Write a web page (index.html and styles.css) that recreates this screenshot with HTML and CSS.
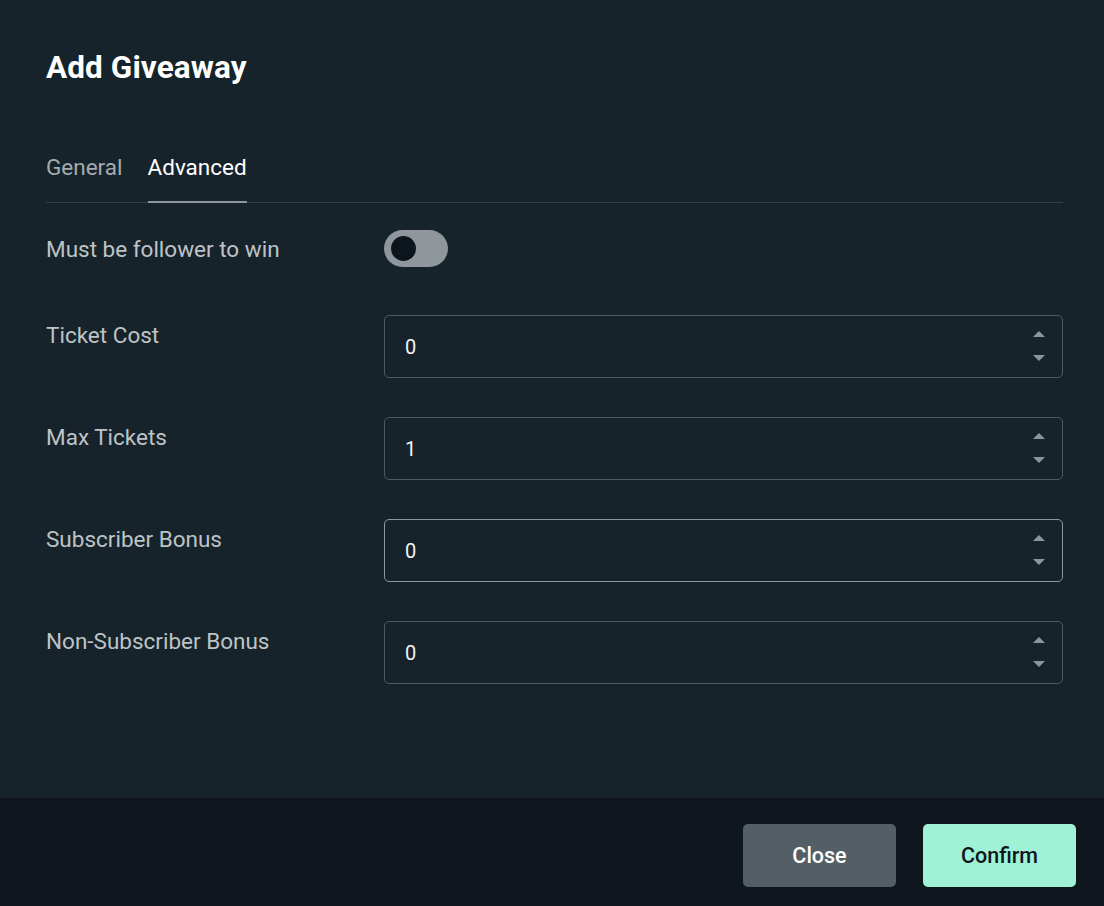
FILE: index.html
```html
<!DOCTYPE html>
<html lang="en">
<head>
    <meta charset="UTF-8">
    <meta name="viewport" content="width=device-width, initial-scale=1.0">
    <title>Add Giveaway</title>
    <link rel="stylesheet" href="styles.css">
</head>
<body>
    <div class="modal">
        <div class="modal-body">
            <h1 class="modal-title">Add Giveaway</h1>

            <div class="tabs">
                <span class="tab">General</span>
                <span class="tab active">Advanced</span>
            </div>

            <div class="form-row toggle-row">
                <label class="field-label">Must be follower to win</label>
                <div class="toggle"><span class="knob"></span></div>
            </div>

            <div class="form-row">
                <label class="field-label">Ticket Cost</label>
                <div class="number-input">
                    <input type="text" value="0">
                    <div class="spin">
                        <svg width="12" height="7" viewBox="0 0 12 7"><path d="M0 7 L6 1 L12 7 Z" fill="#8d969c"/></svg>
                        <svg width="12" height="7" viewBox="0 0 12 7"><path d="M0 0 L6 6 L12 0 Z" fill="#8d969c"/></svg>
                    </div>
                </div>
            </div>

            <div class="form-row">
                <label class="field-label">Max Tickets</label>
                <div class="number-input">
                    <input type="text" value="1">
                    <div class="spin">
                        <svg width="12" height="7" viewBox="0 0 12 7"><path d="M0 7 L6 1 L12 7 Z" fill="#8d969c"/></svg>
                        <svg width="12" height="7" viewBox="0 0 12 7"><path d="M0 0 L6 6 L12 0 Z" fill="#8d969c"/></svg>
                    </div>
                </div>
            </div>

            <div class="form-row">
                <label class="field-label">Subscriber Bonus</label>
                <div class="number-input hover">
                    <input type="text" value="0">
                    <div class="spin">
                        <svg width="12" height="7" viewBox="0 0 12 7"><path d="M0 7 L6 1 L12 7 Z" fill="#8d969c"/></svg>
                        <svg width="12" height="7" viewBox="0 0 12 7"><path d="M0 0 L6 6 L12 0 Z" fill="#8d969c"/></svg>
                    </div>
                </div>
            </div>

            <div class="form-row">
                <label class="field-label">Non-Subscriber Bonus</label>
                <div class="number-input">
                    <input type="text" value="0">
                    <div class="spin">
                        <svg width="12" height="7" viewBox="0 0 12 7"><path d="M0 7 L6 1 L12 7 Z" fill="#8d969c"/></svg>
                        <svg width="12" height="7" viewBox="0 0 12 7"><path d="M0 0 L6 6 L12 0 Z" fill="#8d969c"/></svg>
                    </div>
                </div>
            </div>
        </div>

        <div class="modal-footer">
            <button class="btn btn-close">Close</button>
            <button class="btn btn-confirm">Confirm</button>
        </div>
    </div>
</body>
</html>
```

FILE: styles.css
```css
body {
    margin: 0;
    font-family: Roboto, "Liberation Sans", sans-serif;
    background-color: #17232a;
    color: #fff;
}
.modal {
    width: 1104px;
    height: 906px;
    display: flex;
    flex-direction: column;
    background-color: #17232a;
}
.modal-body {
    flex: 1;
    padding: 0 41px 0 46px;
}
.modal-title {
    margin: 0;
    padding-top: 50px;
    font-size: 31.5px;
    font-weight: 700;
    line-height: 36px;
    letter-spacing: 0.1px;
}
.tabs {
    display: flex;
    gap: 25px;
    margin-top: 68px;
    border-bottom: 1px solid #343f46;
}
.tab {
    font-size: 22.5px;
    line-height: 26px;
    padding-bottom: 21px;
    color: #a3abb0;
    border-bottom: 2px solid transparent;
    margin-bottom: -1px;
}
.tab.active {
    color: #fff;
    border-bottom-color: #8c969c;
}
.form-row {
    display: flex;
    align-items: flex-start;
    margin-bottom: 39px;
}
.toggle-row {
    align-items: center;
    margin-top: 27px;
    margin-bottom: 48px;
}
.field-label {
    width: 338px;
    flex-shrink: 0;
    font-size: 22.5px;
    line-height: 26px;
    color: #bdc3c7;
    padding-top: 7px;
}
.toggle-row .field-label {
    padding-top: 0;
}
.toggle {
    width: 64px;
    height: 37px;
    border-radius: 19px;
    background-color: #90979c;
    display: flex;
    align-items: center;
    padding-left: 7px;
    box-sizing: border-box;
}
.knob {
    width: 25px;
    height: 25px;
    border-radius: 50%;
    background-color: #0d151c;
}
.number-input {
    flex: 1;
    height: 63px;
    box-sizing: border-box;
    border: 1px solid #4e5960;
    border-radius: 5px;
    display: flex;
    align-items: center;
    padding: 0 17px 0 20px;
}
.number-input.hover {
    border-color: #8e979d;
}
.number-input input {
    flex: 1;
    background: none;
    border: none;
    outline: none;
    font-family: inherit;
    font-size: 20px;
    color: #f2f4f5;
    padding: 0;
}
.spin {
    display: flex;
    flex-direction: column;
    gap: 18px;
    margin-top: -1px;
}
.spin svg {
    display: block;
}
.modal-footer {
    height: 108px;
    box-sizing: border-box;
    padding: 6px 28px 0 0;
    background-color: #0f161d;
    display: flex;
    justify-content: flex-end;
    align-items: center;
    gap: 27px;
}
.btn {
    width: 153px;
    height: 63px;
    border: none;
    border-radius: 5px;
    font-family: inherit;
    font-size: 21.5px;
    font-weight: 500;
}
.btn-close {
    background-color: #535e65;
    color: #fff;
}
.btn-confirm {
    background-color: #9ff2d5;
    color: #0f161d;
}
```
